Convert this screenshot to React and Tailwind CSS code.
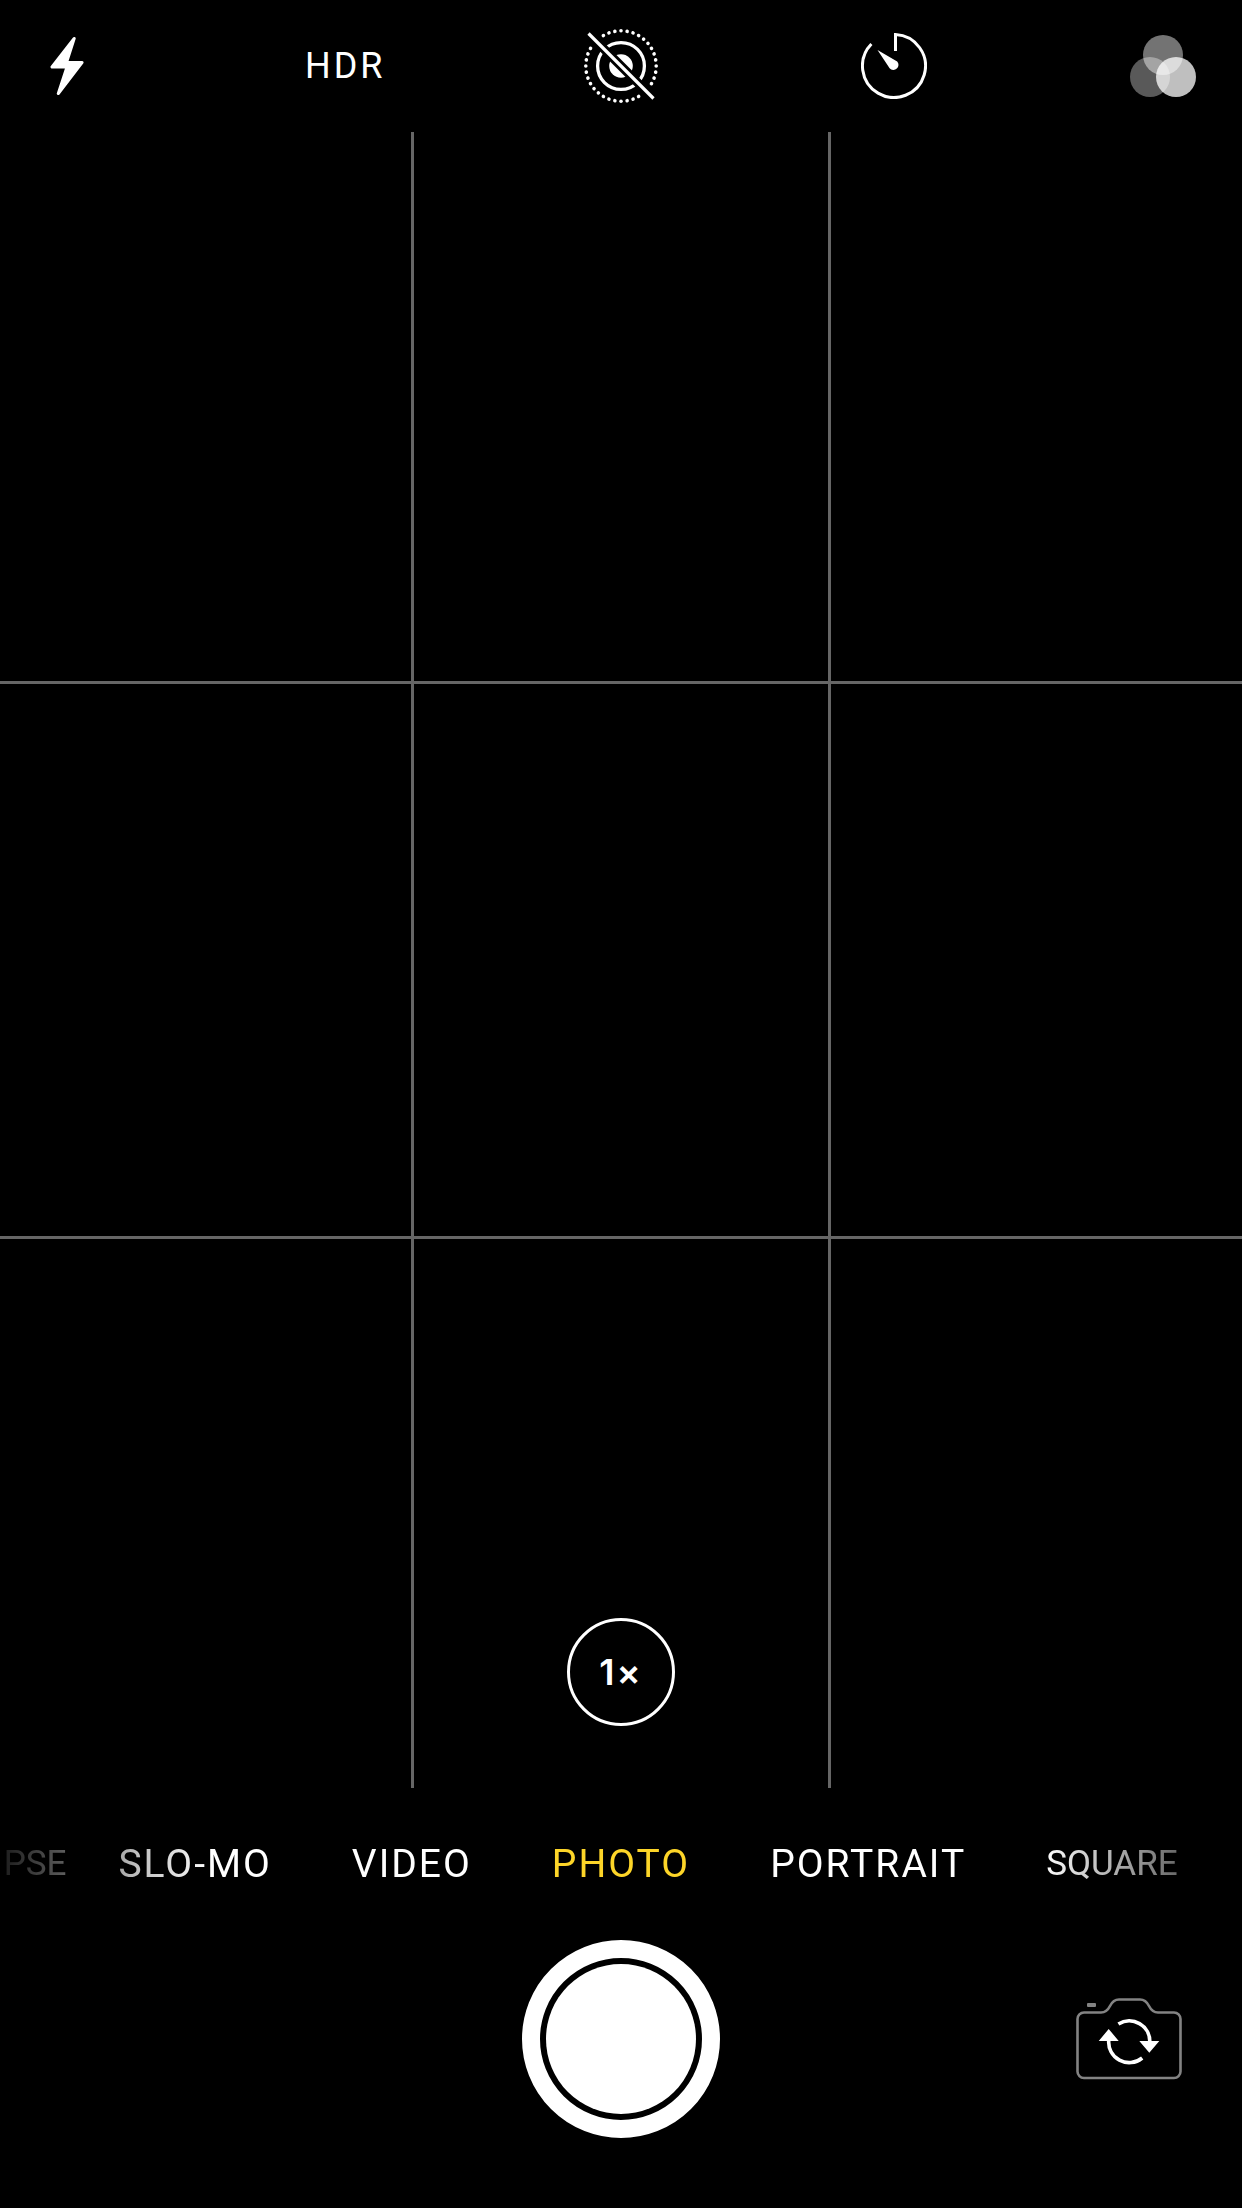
/**
 * Camera Screen
 * Top controls, viewfinder grid, mode strip and shutter
 */

import React, { useState } from 'react';
import clsx from 'clsx';

const FlashIcon = () => (
  <svg width="34" height="60" viewBox="0 0 34 60" fill="white" stroke="white" strokeWidth="3" strokeLinejoin="round" aria-hidden="true">
    <path d="M24.2 2.5 L2 31 H17 L8.3 57.5 L32 26.5 H16.5 Z" />
  </svg>
);

// every 10 degrees, except where the slash crosses the ring
const dots = Array.from({ length: 36 }, (_, i) => i * 10).filter(
  (deg) => ![130, 140, 310, 320].includes(deg)
);

const LivePhotoOffIcon = () => (
  <svg width="74" height="74" viewBox="-37 -37 74 74" aria-hidden="true">
    {dots.map((deg) => (
      <circle key={deg} cx="0" cy="-35.2" r="1.8" fill="white" transform={`rotate(${deg})`} />
    ))}
    <circle r="23.4" fill="none" stroke="white" strokeWidth="3.3" />
    <circle r="11.8" fill="white" />
    <path d="M-32 -32 L32 32" stroke="black" strokeWidth="9" />
    <path d="M-32.5 -32.5 L32.5 32.5" stroke="white" strokeWidth="3.2" />
  </svg>
);

const TimerIcon = () => (
  <svg width="66" height="66" viewBox="-33 -33 66 66" fill="none" aria-hidden="true">
    <path d="M1.5 -15 V-31.5 A31.5 31.5 0 1 1 -22.6 -22" stroke="white" strokeWidth="3" />
    <path d="M-16.5 -16 L3.2 -4.6 A5 5 0 1 1 -4.4 2.2 Z" fill="white" />
  </svg>
);

const FiltersIcon = () => (
  <svg width="66" height="62" viewBox="0 0 66 62" fill="white" aria-hidden="true">
    <circle cx="20" cy="42" r="20" opacity="0.35" />
    <circle cx="33" cy="20" r="20" opacity="0.45" />
    <circle cx="46" cy="42" r="20" opacity="0.75" />
  </svg>
);

const FlipCameraIcon = () => (
  <svg width="106" height="82" viewBox="0 0 106 82" fill="none" aria-hidden="true">
    <path
      d="M8 14.5 H25 C30 14.5 32 12 34 8 C36 4 38 1.5 43 1.5 H64 C69 1.5 71 4 73 8 C75 12 77 14.5 82 14.5 H98 A6.5 6.5 0 0 1 104.5 21 V73.5 A6.5 6.5 0 0 1 98 80 H8 A6.5 6.5 0 0 1 1.5 73.5 V21 A6.5 6.5 0 0 1 8 14.5 Z"
      stroke="#838383"
      strokeWidth="2.6"
    />
    <rect x="11" y="5" width="9" height="4" rx="1" fill="#838383" />
    <path d="M42.4 26 A20.5 20.5 0 0 1 73.8 44 M66.2 60 A20.5 20.5 0 0 1 32.8 42" stroke="white" strokeWidth="3.6" />
    <path d="M63.3 43 H83.3 L73.3 54.8 Z M22.7 43 H42.7 L32.7 31 Z" fill="white" />
  </svg>
);

const leadingModes = [
  { id: 'time-lapse', label: 'PSE', edge: true },
  { id: 'slo-mo', label: 'SLO-MO' },
  { id: 'video', label: 'VIDEO' },
];

const trailingModes = [
  { id: 'portrait', label: 'PORTRAIT' },
  { id: 'square', label: 'SQUARE', edge: true },
];

const ModeButton = ({ mode, active, onSelect }) => (
  <button
    type="button"
    aria-pressed={active}
    onClick={() => onSelect(mode.id)}
    className={clsx(
      'shrink-0 leading-[48px]',
      mode.edge ? 'text-[35px] first:-mr-[28px]' : 'text-[39px] tracking-[2px]',
      active ? 'text-[#fdd528]' : 'text-white'
    )}
  >
    {mode.label}
  </button>
);

const App = () => {
  const [mode, setMode] = useState('photo');

  const renderMode = (item) => (
    <ModeButton key={item.id} mode={item} active={mode === item.id} onSelect={setMode} />
  );

  return (
    <div className="flex min-h-screen flex-col overflow-hidden bg-black font-[Roboto,sans-serif] text-white">
      {/* Top controls */}
      <header className="flex h-[132px] items-center justify-between pr-[46px] pl-[50px]">
        <button type="button" aria-label="Flash" className="w-[52px]">
          <FlashIcon />
        </button>
        <button type="button" className="w-[76px] text-left text-[36px] leading-[48px] tracking-[3px] whitespace-nowrap">
          HDR
        </button>
        <button type="button" aria-label="Live Photo off">
          <LivePhotoOffIcon />
        </button>
        <button type="button" aria-label="Timer">
          <TimerIcon />
        </button>
        <button type="button" aria-label="Filters">
          <FiltersIcon />
        </button>
      </header>

      {/* Viewfinder */}
      <main className="relative flex flex-1">
        <div className="grid flex-1 grid-cols-[411fr_414fr_411fr] grid-rows-[549fr_552fr_549fr] gap-[3px] bg-[#666666]">
          {Array.from({ length: 9 }, (_, i) => (
            <div key={i} className="bg-black" />
          ))}
        </div>
        <button
          type="button"
          aria-label="Zoom 1×"
          className="absolute bottom-[62px] left-1/2 flex size-[108px] -translate-x-1/2 items-center justify-center rounded-full border-[3px] border-white font-[Inter,sans-serif] text-[36px] font-semibold tracking-[2px] [font-feature-settings:'calt'_0]"
        >
          1×
        </button>
      </main>

      {/* Mode strip */}
      <nav
        aria-label="Camera mode"
        className="grid h-[152px] grid-cols-[1fr_auto_1fr] items-center gap-[80px] [mask-image:linear-gradient(to_right,rgb(0_0_0/0.1),rgb(0_0_0/0.35)_5%,rgb(0_0_0/0.75)_11%,black_17%,black_84%,rgb(0_0_0/0.4)_95%)]"
      >
        <div className="flex min-w-0 items-center justify-end gap-[80px]">
          {leadingModes.map(renderMode)}
        </div>
        {renderMode({ id: 'photo', label: 'PHOTO' })}
        <div className="flex min-w-0 items-center gap-[80px]">{trailingModes.map(renderMode)}</div>
      </nav>

      {/* Shutter row */}
      <footer className="grid grid-cols-[1fr_auto_1fr] items-center pb-[70px]">
        <span />
        <button
          type="button"
          aria-label="Take photo"
          className="flex size-[198px] items-center justify-center rounded-full border-[18px] border-white"
        >
          <span className="size-[150px] rounded-full bg-white" />
        </button>
        <button type="button" aria-label="Switch camera" className="mr-[60px] justify-self-end">
          <FlipCameraIcon />
        </button>
      </footer>
    </div>
  );
};

export default App;
